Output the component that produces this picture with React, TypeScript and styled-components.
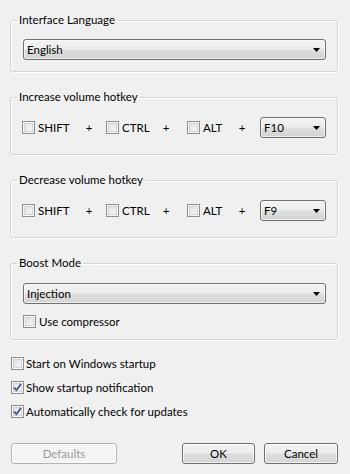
import React from "react";
import styled, { createGlobalStyle } from "styled-components";

const Global = createGlobalStyle`
  html, body { margin: 0; padding: 0; background: #f0f0f0; }
  body { font-family: Lato, "Liberation Sans", sans-serif; font-size: 11.5px; color: #000; }
  * { box-sizing: border-box; }
`;

const Page = styled.div`
  width: 350px;
  height: 474px;
  padding: 12px 12px 0 10px;
  display: flex;
  flex-direction: column;
  gap: 17px;
`;

const Group = styled.fieldset`
  margin: 0;
  padding: ${(p: { $pt: number; $pb: number }) => `${p.$pt}px 11px ${p.$pb}px 12px`};
  border: 1px solid #d5d5d5;
  border-radius: 3px;
  box-shadow: 1px 1px 0 #ffffff, inset 1px 1px 0 #ffffff;
  min-width: 0;
  display: flex;
  flex-direction: column;
  gap: 11px;
`;

const Legend = styled.legend`
  margin-left: -6px;
  padding: 0 2px;
  line-height: 16px;
  height: 16px;
`;

const SelectBox = styled.div<{ $w?: number }>`
  width: ${(p) => (p.$w ? `${p.$w}px` : "100%")};
  height: 21px;
  border: 1px solid #707070;
  border-radius: 3px;
  background: linear-gradient(#f3f3f3 0%, #ececec 48%, #dfdfdf 52%, #d3d3d3 100%);
  box-shadow: inset 0 0 0 1px rgba(255, 255, 255, 0.6);
  display: flex;
  align-items: center;
  justify-content: space-between;
  padding: 0 5px 0 3px;
  flex-shrink: 0;
  line-height: 14px;
`;

const Arrow = styled.svg`
  width: 7px;
  height: 4px;
  flex-shrink: 0;
`;

const Select = ({ value, w }: { value: string; w?: number }) => (
  <SelectBox $w={w}>
    <span>{value}</span>
    <Arrow viewBox="0 0 7 4">
      <polygon points="0,0 7,0 3.5,4" fill="#000" />
    </Arrow>
  </SelectBox>
);

const HotkeyRow = styled.div`
  display: flex;
  align-items: center;
  margin-left: -1px;
  height: 21px;
`;

const CheckLabel = styled.label<{ $w?: number; $gap: number }>`
  display: flex;
  align-items: center;
  gap: ${(p) => p.$gap}px;
  height: 13px;
  line-height: 13px;
  white-space: nowrap;
  width: ${(p) => (p.$w ? `${p.$w}px` : "auto")};
  flex-shrink: 0;
`;

const Box = styled.span`
  width: 13px;
  height: 13px;
  flex-shrink: 0;
  border: 1px solid #8e8f8f;
  background: linear-gradient(135deg, #dcdcdc 0%, #eeeeee 55%, #fbfbfb 100%);
  box-shadow: inset 0 0 0 1px #f6f6f6, inset 0 0 0 2px #d2d2d2;
  display: flex;
  align-items: center;
  justify-content: center;
`;

const Check = ({
  label,
  checked,
  w,
  gap = 3,
}: {
  label: string;
  checked?: boolean;
  w?: number;
  gap?: number;
}) => (
  <CheckLabel $w={w} $gap={gap}>
    <Box>
      {checked && (
        <svg width="9" height="9" viewBox="0 0 9 9">
          <path d="M1 4.5 L3.5 7.2 L8 1" fill="none" stroke="#3d4f8a" strokeWidth="1.8" />
        </svg>
      )}
    </Box>
    <span>{label}</span>
  </CheckLabel>
);

const Plus = styled.span<{ $w: number }>`
  width: ${(p) => p.$w}px;
  text-align: center;
  flex-shrink: 0;
`;

const Options = styled.div`
  display: flex;
  flex-direction: column;
  gap: 11px;
  padding-left: 1px;
`;

const Buttons = styled.div`
  margin-top: 8px;
  display: flex;
  justify-content: space-between;
  padding-left: 1px;
`;

const Right = styled.div`
  display: flex;
  gap: 9px;
`;

const Button = styled.div<{ $w: number; $disabled?: boolean }>`
  width: ${(p) => p.$w}px;
  height: 21px;
  border: 1px solid ${(p) => (p.$disabled ? "#adb2b5" : "#707070")};
  border-radius: 3px;
  background: ${(p) =>
    p.$disabled
      ? "#f4f4f4"
      : "linear-gradient(#f3f3f3 0%, #ececec 48%, #dfdfdf 52%, #d3d3d3 100%)"};
  box-shadow: inset 0 0 0 1px rgba(255, 255, 255, 0.7);
  color: ${(p) => (p.$disabled ? "#9a9a9a" : "#000")};
  display: flex;
  align-items: center;
  justify-content: center;
`;

const Hotkey = ({ title, keyName }: { title: string; keyName: string }) => (
  <Group $pt={12} $pb={16}>
    <Legend>{title}</Legend>
    <HotkeyRow>
      <Check label="SHIFT" w={50} />
      <Plus $w={34}>+</Plus>
      <Check label="CTRL" w={39} />
      <Plus $w={42}>+</Plus>
      <Check label="ALT" w={37} />
      <Plus $w={36}>+</Plus>
      <Select value={keyName} w={66} />
    </HotkeyRow>
  </Group>
);

export default function App() {
  return (
    <>
      <Global />
      <Page>
        <Group $pt={11} $pb={11}>
          <Legend>Interface Language</Legend>
          <Select value="English" />
        </Group>
        <Hotkey title="Increase volume hotkey" keyName="F10" />
        <Hotkey title="Decrease volume hotkey" keyName="F9" />
        <Group $pt={12} $pb={11}>
          <Legend>Boost Mode</Legend>
          <Select value="Injection" />
          <Check label="Use compressor" />
        </Group>
        <Options>
          <Check label="Start on Windows startup" gap={2} />
          <Check label="Show startup notification" checked gap={2} />
          <Check label="Automatically check for updates" checked gap={2} />
        </Options>
        <Buttons>
          <Button $w={106} $disabled>Defaults</Button>
          <Right>
            <Button $w={73}>OK</Button>
            <Button $w={74}>Cancel</Button>
          </Right>
        </Buttons>
      </Page>
    </>
  );
}
